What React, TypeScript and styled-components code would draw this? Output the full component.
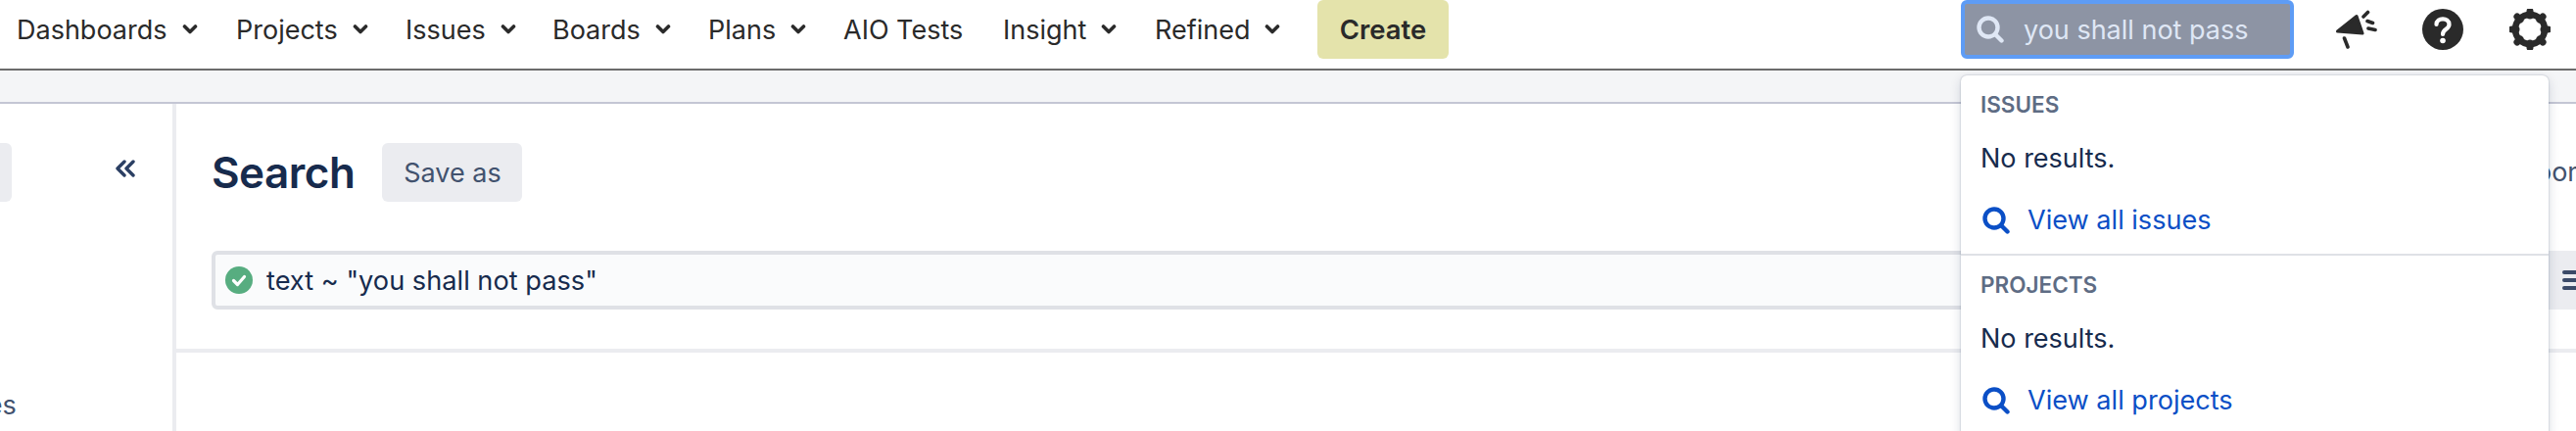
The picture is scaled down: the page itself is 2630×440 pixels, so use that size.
import React from "react";
import styled, { createGlobalStyle } from "styled-components";

const Global = createGlobalStyle`
  html, body { margin: 0; padding: 0; background: #fff; }
  body { font-family: Inter, "Noto Sans", "Liberation Sans", sans-serif; width: 2630px; height: 440px; overflow: hidden; }
  * { box-sizing: border-box; }
`;

const Page = styled.div`
  position: relative;
  width: 2630px;
  height: 440px;
  overflow: hidden;
  display: flex;
  flex-direction: column;
`;
const TopBar = styled.header`
  height: 72px;
  flex: none;
  border-bottom: 2px solid #6b6b6b;
  display: flex;
  align-items: flex-start;
  padding-left: 17px;
`;
const NavItem = styled.div<{ $w: number }>`
  width: ${(p) => p.$w}px;
  flex: none;
  height: 60px;
  display: flex;
  align-items: center;
  gap: 15px;
  font-size: 27px;
  color: #2a2a2a;
  white-space: nowrap;
`;
const Create = styled.div`
  width: 134px;
  height: 60px;
  flex: none;
  background: #e4e3ab;
  border-radius: 6px;
  display: flex;
  align-items: center;
  justify-content: center;
  font-size: 27.5px;
  font-weight: 600;
  color: #2a2a2a;
`;
const Spacer = styled.div`
  flex: 1;
`;
const SearchBox = styled.div`
  width: 340px;
  height: 60px;
  flex: none;
  background: #8d94a4;
  border: 4px solid #5e9cf5;
  border-radius: 6px;
  display: flex;
  align-items: center;
  gap: 20px;
  padding-left: 12px;
  font-size: 27px;
  color: #dfe7f5;
`;
const Icons = styled.div`
  width: 288px;
  height: 60px;
  flex: none;
  display: flex;
  align-items: center;
`;
const IconSlot = styled.div<{ $l: number }>`
  flex: none;
  margin-left: ${(p) => p.$l}px;
  display: flex;
`;
const Band = styled.div`
  height: 34px;
  flex: none;
  background: #f4f5f7;
  border-bottom: 2px solid #c4c6d4;
`;
const Body = styled.div`
  flex: 1;
  display: flex;
  min-height: 0;
`;
const Sidebar = styled.aside`
  width: 180px;
  flex: none;
  border-right: 4px solid #ebecf0;
  display: flex;
  flex-direction: column;
  padding-top: 40px;
  overflow: hidden;
`;
const SideTop = styled.div`
  display: flex;
  justify-content: space-between;
`;
const SideBtn = styled.div`
  width: 12px;
  height: 60px;
  background: #ebecf0;
  border-radius: 0 6px 6px 0;
`;
const Collapse = styled.div`
  margin: 17px 37px 0 0;
  display: flex;
`;
const SideText = styled.div`
  margin: 193px 0 0 -65px;
  font-size: 27px;
  line-height: 30px;
  color: #42526e;
  white-space: nowrap;
`;
const Main = styled.main`
  flex: 1;
  min-width: 0;
`;
const HeadRow = styled.div`
  height: 254px;
  padding: 40px 0 0 36px;
  border-bottom: 4px solid #ebecf0;
`;
const TitleRow = styled.div`
  height: 60px;
  display: flex;
  align-items: center;
  gap: 28px;
  position: relative;
`;
const Title = styled.h1`
  margin: 0;
  font-size: 44px;
  font-weight: 600;
  letter-spacing: -0.5px;
  color: #172b4d;
`;
const SaveAs = styled.div`
  width: 143px;
  height: 60px;
  border-radius: 6px;
  background: #ebecf0;
  color: #42526e;
  font-size: 27px;
  display: flex;
  align-items: center;
  justify-content: center;
`;
const Cut = styled.span`
  position: absolute;
  left: 2356px;
  top: 13px;
  font-size: 27px;
  color: #42526e;
  white-space: nowrap;
`;
const Query = styled.div`
  margin-top: 50px;
  height: 60px;
  display: flex;
  align-items: stretch;
`;
const QueryField = styled.div`
  flex: 1;
  border: 4px solid #dfe1e6;
  border-radius: 6px 0 0 6px;
  background: #fafbfc;
  display: flex;
  align-items: center;
  gap: 14px;
  padding-left: 10px;
  font-size: 27.2px;
  color: #172b4d;
`;
const QueryBtn = styled.div`
  width: 40px;
  flex: none;
  background: #ebecf0;
  display: flex;
  align-items: center;
  padding-left: 26px;
`;
const Dropdown = styled.section`
  position: absolute;
  left: 2002px;
  top: 77px;
  width: 600px;
  height: 400px;
  background: #fff;
  border-radius: 6px;
  box-shadow: 0 4px 12px rgba(9, 30, 66, 0.16), 0 0 2px rgba(9, 30, 66, 0.3);
`;
const Section = styled.div`
  height: 182px;
  padding-left: 20px;
  & + & {
    border-top: 2px solid #dfe1e6;
  }
`;
const Heading = styled.div`
  padding-top: 16px;
  height: 49px;
  font-size: 22.5px;
  line-height: 27px;
  font-weight: 600;
  color: #5e6c84;
`;
const Empty = styled.div`
  margin-top: 21px;
  font-size: 27px;
  line-height: 30px;
  color: #172b4d;
`;
const ViewAll = styled.div`
  margin-top: 33px;
  padding-left: 2px;
  display: flex;
  align-items: center;
  gap: 18px;
  font-size: 27.1px;
  line-height: 30px;
  color: #0b4fc6;
`;

const Chevron = () => (
  <svg width="16" height="12" viewBox="0 0 16 12" fill="none">
    <path d="M2.5 3 L8 8.5 L13.5 3" stroke="#2a2a2a" strokeWidth="3.6" strokeLinecap="round" strokeLinejoin="round" />
  </svg>
);
const Loupe = ({ color, size }: { color: string; size: number }) => (
  <svg width={size} height={size} viewBox="0 0 28 28" fill="none">
    <circle cx="12" cy="12" r="9.5" stroke={color} strokeWidth="4.4" />
    <path d="M19 19 L25.5 25.5" stroke={color} strokeWidth="4.4" strokeLinecap="round" />
  </svg>
);

const nav: [string, number, boolean][] = [
  ["Dashboards", 224, true],
  ["Projects", 173, true],
  ["Issues", 150, true],
  ["Boards", 159, true],
  ["Plans", 138, true],
  ["AIO Tests", 163, false],
  ["Insight", 155, true],
  ["Refined", 166, true],
];

const teeth = [0, 45, 90, 135, 180, 225, 270, 315];

export default function App() {
  return (
    <Page>
      <Global />
      <TopBar>
        {nav.map(([label, w, c]) => (
          <NavItem key={label} $w={w}>
            {label}
            {c && <Chevron />}
          </NavItem>
        ))}
        <Create>Create</Create>
        <Spacer />
        <SearchBox>
          <Loupe color="#dfe7f5" size={28} />
          you shall not pass
        </SearchBox>
        <Icons>
          <IconSlot $l={43}>
            <svg width="44" height="40" viewBox="0 0 44 40" fill="none">
              <path d="M1.5 22 L21 6.5 L27 24 Z" fill="#2a2a2a" stroke="#2a2a2a" strokeWidth="3" strokeLinejoin="round" />
              <path d="M8.5 29 L12 38" stroke="#2a2a2a" strokeWidth="3.6" strokeLinecap="round" />
              <path d="M28 7 L32.5 2.5 M32 11.5 L37.5 13.5 M33 19 L40 20.5" stroke="#2a2a2a" strokeWidth="3.6" strokeLinecap="round" />
            </svg>
          </IconSlot>
          <IconSlot $l={44}>
            <svg width="42" height="42" viewBox="0 0 42 42">
              <circle cx="21" cy="21" r="21" fill="#2a2a2a" />
              <path d="M14.5 16 C14.5 8.5 27.5 8.5 27.5 16 C27.5 21 21 20.5 21 26" stroke="#fff" strokeWidth="4.2" fill="none" strokeLinecap="round" />
              <circle cx="21" cy="32.5" r="2.8" fill="#fff" />
            </svg>
          </IconSlot>
          <IconSlot $l={47}>
            <svg width="42" height="42" viewBox="0 0 42 42" fill="none">
              <circle cx="21" cy="21" r="15" stroke="#2a2a2a" strokeWidth="6.5" />
              {teeth.map((a) => (
                <path key={a} d="M21 2.5 V7" stroke="#2a2a2a" strokeWidth="7" strokeLinecap="round" transform={`rotate(${a} 21 21)`} />
              ))}
            </svg>
          </IconSlot>
        </Icons>
      </TopBar>
      <Band />
      <Body>
        <Sidebar>
          <SideTop>
            <SideBtn />
            <Collapse>
              <svg width="22" height="18" viewBox="0 0 22 18" fill="none">
                <path d="M10 2 L3 9 L10 16 M19 2 L12 9 L19 16" stroke="#2b3f63" strokeWidth="3.4" strokeLinecap="round" strokeLinejoin="round" />
              </svg>
            </Collapse>
          </SideTop>
          <SideText>Issues</SideText>
        </Sidebar>
        <Main>
          <HeadRow>
            <TitleRow>
              <Title>Search</Title>
              <SaveAs>Save as</SaveAs>
              <Cut>Zoom</Cut>
            </TitleRow>
            <Query>
              <QueryField>
                <svg width="28" height="28" viewBox="0 0 28 28">
                  <circle cx="14" cy="14" r="14" fill="#57ad80" />
                  <path d="M8.5 14.5 L12.5 18.5 L19.5 10.5" stroke="#fff" strokeWidth="3.2" fill="none" strokeLinecap="round" strokeLinejoin="round" />
                </svg>
                {'text ~ "you shall not pass"'}
              </QueryField>
              <QueryBtn>
                <svg width="14" height="22" viewBox="0 0 14 22">
                  <path d="M2 3 H20 M2 11 H20 M2 19 H20" stroke="#3b4a68" strokeWidth="4" strokeLinecap="round" />
                </svg>
              </QueryBtn>
            </Query>
          </HeadRow>
        </Main>
      </Body>
      <Dropdown>
        <Section>
          <Heading>ISSUES</Heading>
          <Empty>No results.</Empty>
          <ViewAll>
            <Loupe color="#0b4fc6" size={28} />
            View all issues
          </ViewAll>
        </Section>
        <Section>
          <Heading>PROJECTS</Heading>
          <Empty>No results.</Empty>
          <ViewAll>
            <Loupe color="#0b4fc6" size={28} />
            View all projects
          </ViewAll>
        </Section>
      </Dropdown>
    </Page>
  );
}
